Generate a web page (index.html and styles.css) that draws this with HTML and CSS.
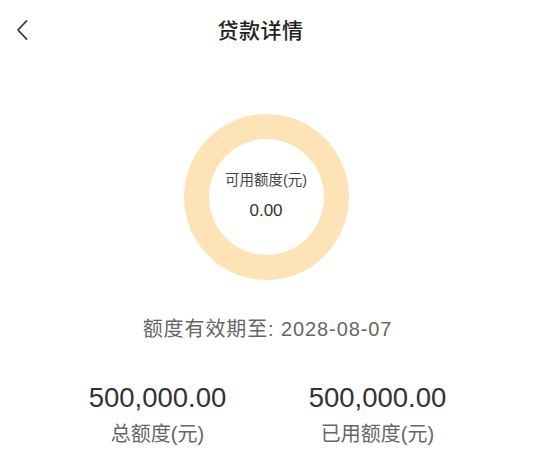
FILE: index.html
```html
<!DOCTYPE html>
<html lang="zh-CN">
<head>
<meta charset="utf-8">
<title>贷款详情</title>
<link rel="stylesheet" href="styles.css">
</head>
<body>
<div class="page">
  <header class="topbar">
    <span class="back">
      <svg width="14" height="22" viewBox="0 0 14 22"><path d="M11.5 2 L3 11 L11.5 20" fill="none" stroke="#333" stroke-width="1.8" stroke-linecap="round" stroke-linejoin="round"/></svg>
    </span>
    <h1 class="title">贷款详情</h1>
  </header>
  <section class="ring-wrap">
    <div class="ring">
      <div class="ring-label">可用额度(元)</div>
      <div class="ring-value">0.00</div>
    </div>
  </section>
  <p class="validity">额度有效期至: 2028-08-07</p>
  <section class="stats">
    <div class="stat">
      <div class="stat-num">500,000.00</div>
      <div class="stat-label">总额度(元)</div>
    </div>
    <div class="stat">
      <div class="stat-num">500,000.00</div>
      <div class="stat-label">已用额度(元)</div>
    </div>
  </section>
</div>
</body>
</html>
```

FILE: styles.css
```css
* { box-sizing: border-box; }
html, body { margin: 0; padding: 0; background: #fff; }
body {
  font-family: "Liberation Sans", "Noto Sans CJK SC", sans-serif;
  color: #333;
  width: 535px;
  height: 453px;
  overflow: hidden;
}
.page { display: flex; flex-direction: column; }
.topbar {
  position: relative;
  height: 60px;
  display: flex;
  align-items: center;
  justify-content: center;
}
.back {
  position: absolute;
  left: 15px;
  top: 19px;
  width: 14px;
  height: 22px;
  display: flex;
}
.title {
  margin: -2px 0 0 -14px;
  font-family: "Noto Sans CJK SC", sans-serif;
  font-size: 21px;
  font-weight: 500;
  color: #222;
  letter-spacing: 0.5px;
  line-height: 1;
}
.ring-wrap {
  display: flex;
  justify-content: center;
  padding-top: 54px;
}
.ring {
  width: 165px;
  height: 166px;
  border-radius: 50%;
  border: 25px solid #fde3b6;
  display: flex;
  flex-direction: column;
  align-items: center;
  justify-content: center;
  margin-left: -3px;
}
.ring-label {
  font-size: 14.5px;
  color: #444;
  line-height: 1;
  margin-top: -2px;
}
.ring-value {
  font-size: 17px;
  color: #333;
  line-height: 1;
  margin-top: 14px;
}
.validity {
  margin: 0;
  margin-top: 39px;
  text-align: center;
  font-size: 20px;
  color: #666;
  line-height: 1;
  letter-spacing: 0.9px;
}
.stats {
  display: flex;
  justify-content: center;
  margin-top: 45px;
}
.stat {
  width: 220px;
  display: flex;
  flex-direction: column;
  align-items: center;
}
.stat-num {
  font-size: 27.5px;
  color: #333;
  line-height: 1;
}
.stat-label {
  font-size: 20px;
  color: #666;
  line-height: 1;
  margin-top: 12px;
}
```
